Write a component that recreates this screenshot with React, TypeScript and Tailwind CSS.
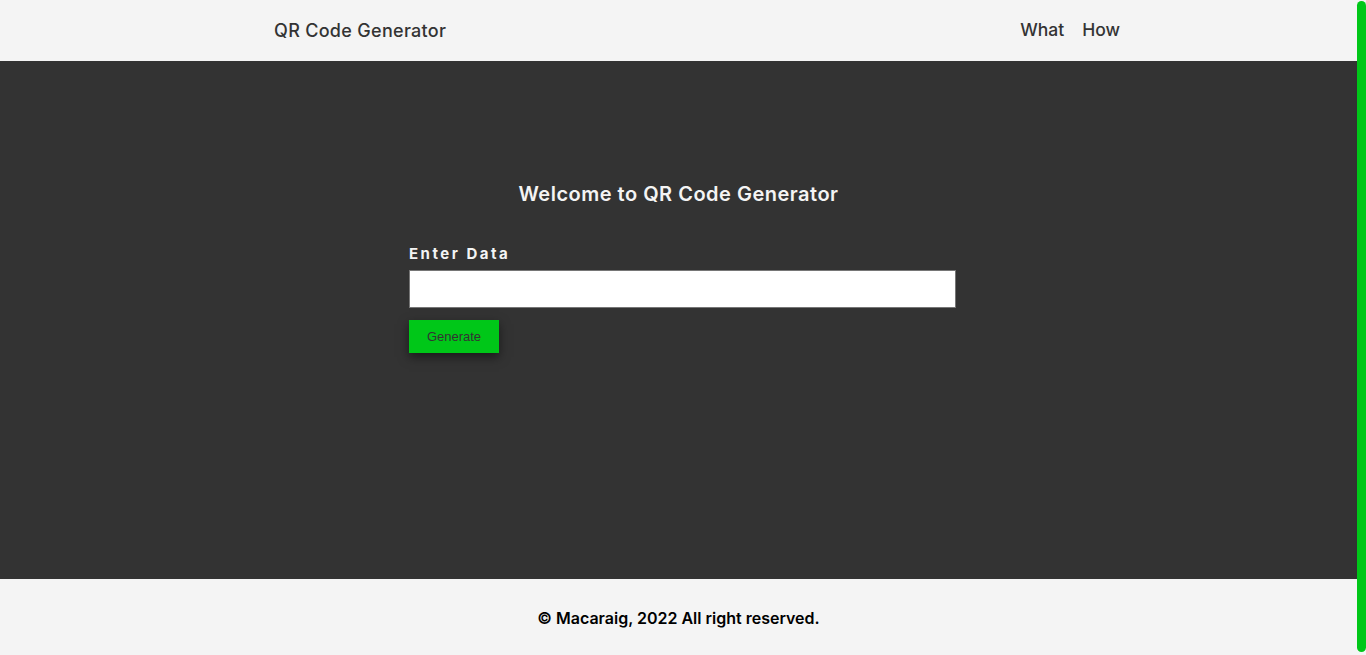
import React from 'react';

const App = () => {
  return (
    <div
      className="flex h-[655px] overflow-hidden bg-[#f4f4f4]"
      style={{ fontFamily: 'Inter, "Open Sans", sans-serif' }}
    >
      <div className="flex-1 flex flex-col">
        <header className="h-[61px] shrink-0 bg-[#f4f4f4] flex items-center justify-between pl-[274px] pr-[237px] text-[#333]">
          <h1 className="text-[18px] font-medium tracking-[0.3px]">QR Code Generator</h1>
          <nav className="flex gap-[18px] text-[17.5px] font-medium">
            <a href="#what">What</a>
            <a href="#how">How</a>
          </nav>
        </header>

        <main className="h-[518px] shrink-0 bg-[#333333] pt-[121px]">
          <h2 className="text-center text-[20px] font-semibold tracking-[0.5px] text-[#f4f4f4] leading-6">
            Welcome to QR Code Generator
          </h2>
          <form className="ml-[409px] w-[547px] mt-[38px]" onSubmit={(e) => e.preventDefault()}>
            <label className="block text-[15px] font-bold tracking-[2.5px] text-[#f4f4f4] leading-5">
              Enter Data
            </label>
            <input
              type="text"
              className="mt-[6px] block w-full h-[38px] bg-white border border-[#767676] outline-none px-2"
            />
            <button
              type="submit"
              className="mt-[12px] w-[90px] h-[33px] bg-[#00c718] text-[#333] text-[13px] shadow-[0_4px_10px_rgba(0,0,0,0.5)]"
              style={{ fontFamily: '"Liberation Sans", Arial, sans-serif' }}
            >
              Generate
            </button>
          </form>
        </main>

        <footer className="h-[80px] shrink-0 bg-[#f4f4f4] flex items-center justify-center pb-[3px]">
          <p className="text-[16px] font-semibold text-black">© Macaraig, 2022 All right reserved.</p>
        </footer>
      </div>

      {/* scrollbar */}
      <div className="w-[9px] shrink-0 pt-[1px]">
        <div className="h-[651px] w-full rounded-full bg-[#00c718]" />
      </div>
    </div>
  );
};

export default App;
